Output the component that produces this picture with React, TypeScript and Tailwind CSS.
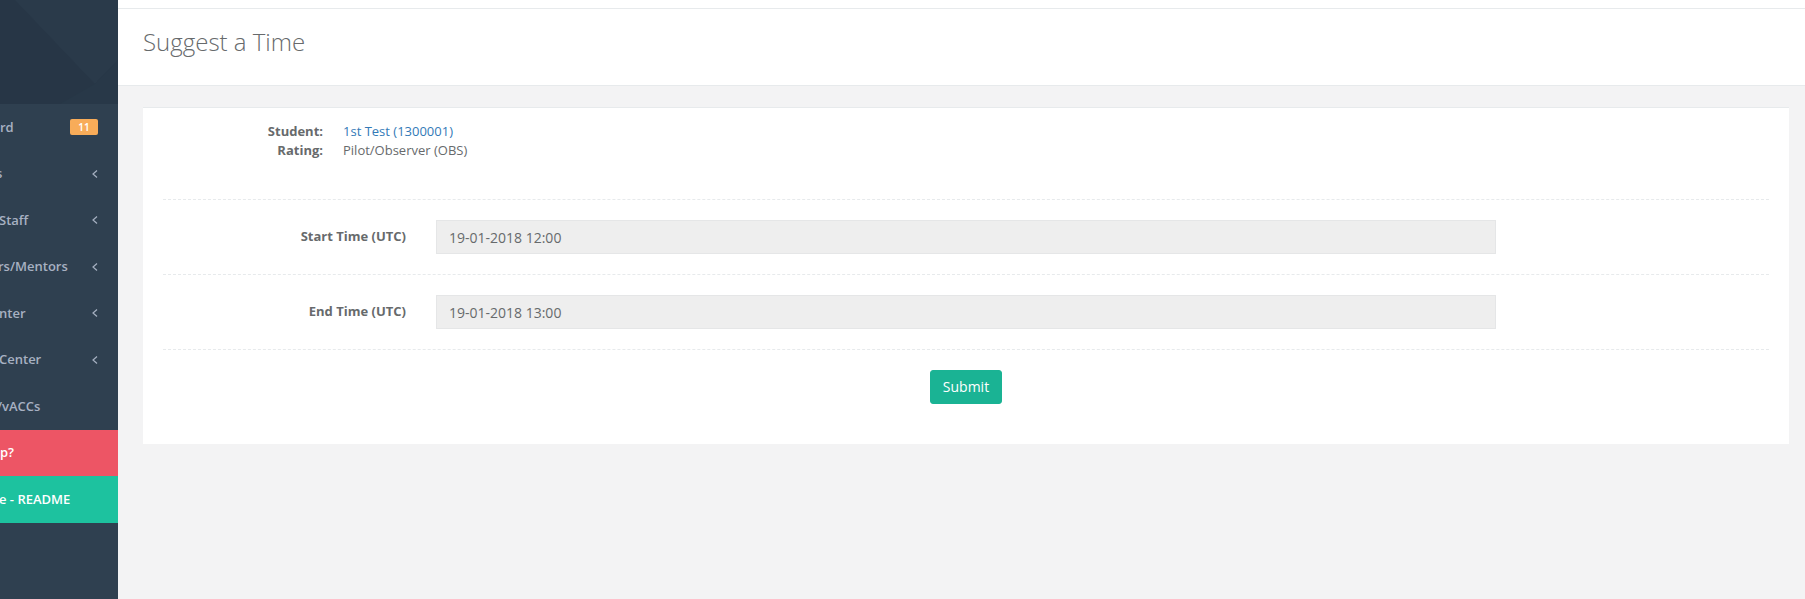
import React from "react";

const font = { fontFamily: '"Open Sans", "Liberation Sans", sans-serif' };

const Chevron = () => (
  <svg width="6" height="8" viewBox="0 0 6 8" className="shrink-0">
    <polyline points="5,0.5 1,4 5,7.5" fill="none" stroke="#a7b1c2" strokeWidth="1.2" />
  </svg>
);

const navItems = [
  { text: "rd", shift: "ml-0", badge: "11" },
  { text: "s", shift: "ml-[-4px]", chevron: true },
  { text: "Staff", shift: "ml-[-1px]", chevron: true },
  { text: "rs/Mentors", shift: "ml-[-2px]", chevron: true },
  { text: "nter", shift: "ml-[-1px]", chevron: true },
  { text: "Center", shift: "ml-[-1px]", chevron: true },
  { text: "/vACCs", shift: "ml-[-3px]" },
];

const Sidebar = () => (
  <aside className="w-[118px] shrink-0 bg-[#2f4050] flex flex-col overflow-hidden">
    {/* profile header with pattern */}
    <div className="h-[104px] bg-[#283848]">
      <svg width="118" height="104" viewBox="0 0 118 104" className="block">
        <polygon points="0,0 15,0 95,84 118,60 118,104 0,104" fill="#273646" />
        <polygon points="15,0 118,0 118,60 95,84" fill="#2a3a4a" />
        <polygon points="60,104 95,84 118,60 118,104" fill="#283848" />
      </svg>
    </div>

    <ul className="flex flex-col">
      {navItems.map((item, i) => (
        <li
          key={i}
          className="flex items-center justify-between h-[46.5px] pr-[20px] text-[13px] font-semibold text-[#a7b1c2]"
        >
          <span className={`${item.shift} whitespace-nowrap`}>{item.text}</span>
          {item.badge && (
            <span className="h-[16px] w-[28px] rounded-[2px] bg-[#f8ac59] text-white text-[10px] font-semibold flex items-center justify-center">
              {item.badge}
            </span>
          )}
          {item.chevron && <Chevron />}
        </li>
      ))}
      <li className="h-[46.5px] flex items-center bg-[#ed5565] text-white text-[13px] font-semibold">
        <span className="whitespace-nowrap">p?</span>
      </li>
      <li className="h-[46.5px] flex items-center bg-[#1dc29f] text-white text-[13px] font-semibold">
        <span className="whitespace-nowrap ml-[-1px]">e - README</span>
      </li>
    </ul>
  </aside>
);

const FormRow = ({ label, value }: { label: string; value: string }) => (
  <div className="flex items-center">
    <label className="w-[243px] text-right text-[13px] font-bold text-[#676a6c]">{label}</label>
    <input
      readOnly
      value={value}
      className="ml-[30px] w-[1060px] h-[34px] px-[12px] bg-[#eeeeee] border border-[#e5e6e7] text-[14px] text-[#676a6c] outline-none"
    />
  </div>
);

const Dashed = () => <div className="h-0 border-t border-dashed border-[#e7eaec]" />;

export default function App() {
  return (
    <div className="flex h-[599px] w-full text-[#676a6c]" style={font}>
      <Sidebar />
      <main className="flex-1 bg-[#f3f3f4] flex flex-col">
        <div className="h-[9px] bg-white border-b border-[#e7eaec]" />
        <div className="h-[77px] bg-white border-b border-[#e7eaec] pl-[25px] pt-[20px]">
          <h2 className="text-[24px] font-light leading-[26.4px] text-[#676a6c]">Suggest a Time</h2>
        </div>

        <div className="pl-[25px] pr-[16px] pt-[21px]">
          <div className="bg-white border-t border-[#e7eaec] px-[20px] pt-[14px] pb-[40px] flex flex-col">
            <dl className="text-[13px] leading-[19px]">
              <div className="flex">
                <dt className="w-[160px] text-right font-bold">Student:</dt>
                <dd className="ml-[20px]">
                  <a href="#" className="text-[#337ab7]">1st Test (1300001)</a>
                </dd>
              </div>
              <div className="flex">
                <dt className="w-[160px] text-right font-bold">Rating:</dt>
                <dd className="ml-[20px]">Pilot/Observer (OBS)</dd>
              </div>
            </dl>

            <div className="mt-[39px]">
              <Dashed />
            </div>
            <div className="mt-[20px]">
              <FormRow label="Start Time (UTC)" value="19-01-2018 12:00" />
            </div>
            <div className="mt-[20px]">
              <Dashed />
            </div>
            <div className="mt-[20px]">
              <FormRow label="End Time (UTC)" value="19-01-2018 13:00" />
            </div>
            <div className="mt-[20px]">
              <Dashed />
            </div>
            <div className="mt-[20px] flex justify-center">
              <button className="h-[34px] px-[12px] rounded-[3px] bg-[#1ab394] border border-[#1ab394] text-white text-[14px] leading-[20px]">
                Submit
              </button>
            </div>
          </div>
        </div>
      </main>
    </div>
  );
}
